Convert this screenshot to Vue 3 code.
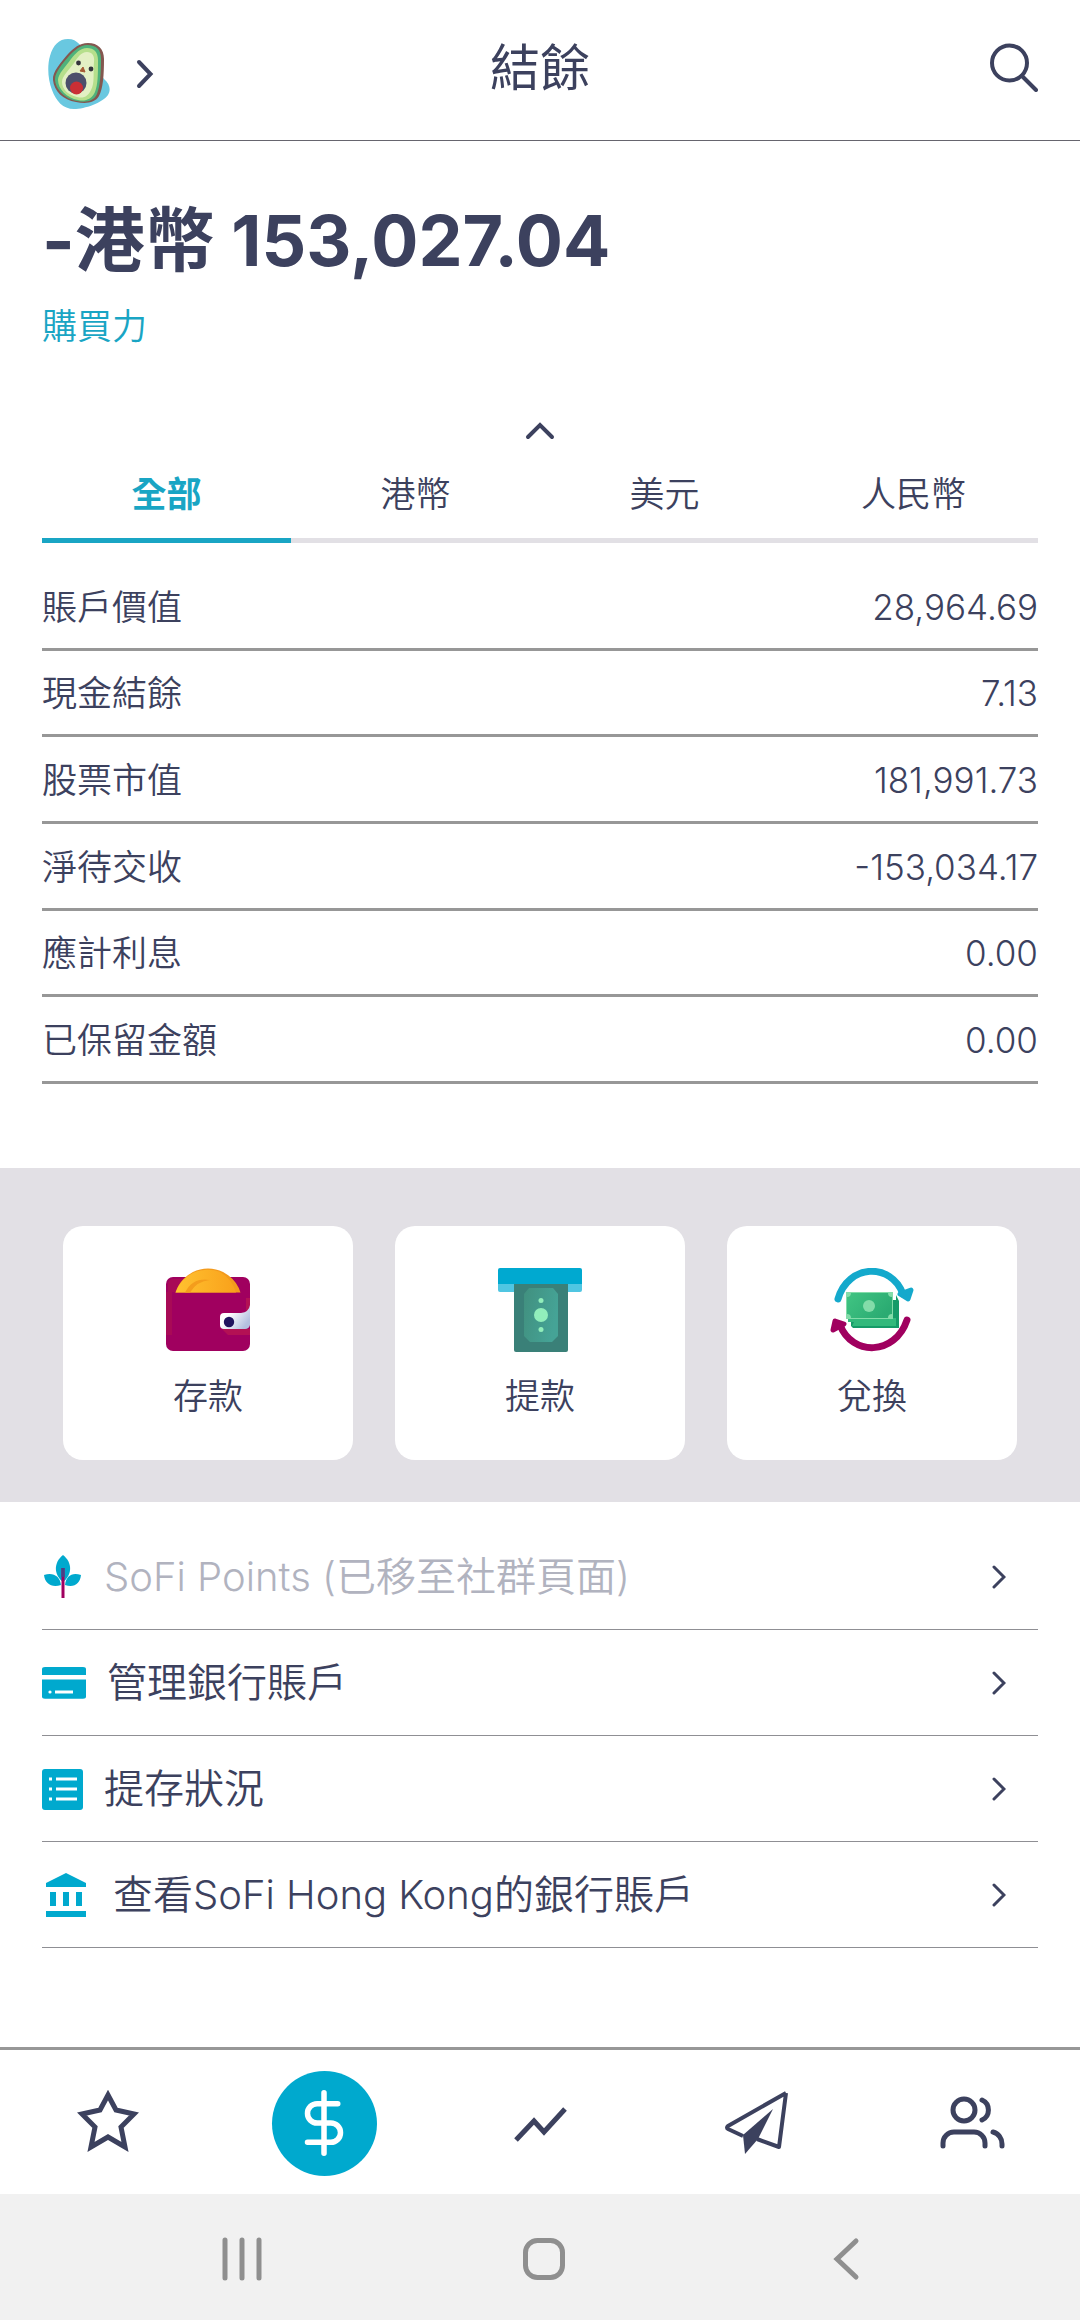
<script setup>
import { ref } from 'vue';

const tabs = ['全部', '港幣', '美元', '人民幣'];
const activeTab = ref('全部');
const showDetail = ref(true);

const balances = [
  { label: '賬戶價值', value: '28,964.69' },
  { label: '現金結餘', value: '7.13' },
  { label: '股票市值', value: '181,991.73' },
  { label: '淨待交收', value: '-153,034.17' },
  { label: '應計利息', value: '0.00' },
  { label: '已保留金額', value: '0.00' },
];

const menus = [
  { icon: 'leaf', label: 'SoFi Points (已移至社群頁面)', disabled: true },
  { icon: 'card', label: '管理銀行賬戶' },
  { icon: 'list', label: '提存狀況' },
  { icon: 'bank', label: '查看SoFi Hong Kong的銀行賬戶' },
];
</script>

<template>
  <div class="page">
    <header class="header">
      <button class="profile-btn" aria-label="個人檔案">
        <svg class="avatar" viewBox="0 0 62 70">
          <path
            d="M20 0C30 0 33 8 41 15C49 23 52 36 56 40C62 45 63 51 60 56C54 64 37 70 26 70C15 70 8 62 4 51C0 41-1 27 2 17C5 6 11 0 20 0Z"
            fill="#69c8e0"
          />
          <path
            d="M40 4C50 4 56 10 56 20C56 36 55 50 51 57C47 64 38 65 28 63C15 61 6 52 5 41C4 33 14 22 20 15C26 9 31 4 40 4Z"
            fill="#84574f"
          />
          <path
            d="M39 6C49 6 53 11 53 20C53 36 52 47 49 55C46 62 38 64 29 62C17 60 7 50 7 40C7 33 15 24 21 17C27 11 32 6 39 6Z"
            fill="#4fb27c"
          />
          <path
            d="M39 9C46 9 50 13 50 21C50 36 50 45 47 53C44 60 37 63 30 61C19 59 10 50 10 41C10 35 18 27 23 20C28 14 32 9 39 9Z"
            fill="#b6df8c"
          />
          <path
            d="M39 13C44 13 47 17 46 23C45 34 47 44 43 51C40 57 36 60 29 58C20 56 14 50 14 43C14 37 21 31 26 24C30 18 33 13 39 13Z"
            fill="#e3f0c4"
          />
          <circle cx="28" cy="44" r="10.5" fill="#4c4f6b" />
          <circle cx="28.5" cy="49" r="6.5" fill="#c92f35" />
          <circle cx="30.5" cy="24" r="2.4" fill="#34343c" />
          <circle cx="43" cy="30" r="2.4" fill="#34343c" />
          <path d="M35 28L37 33L32 32Z" fill="#a55a34" stroke="#a55a34" stroke-linejoin="round" />
        </svg>
        <svg class="profile-arrow" viewBox="0 0 18 30">
          <path d="M3 3L14.5 15L3 27" />
        </svg>
      </button>
      <h1>結餘</h1>
      <button class="search-btn" aria-label="搜尋">
        <svg viewBox="0 0 50 50">
          <circle cx="21.5" cy="21" r="17.5" />
          <path d="M34 34L48 48" />
        </svg>
      </button>
    </header>

    <main>
      <section class="balance">
        <h2>-港幣 153,027.04</h2>
        <a class="buying-power" href="#">購買力</a>
        <button class="toggle-btn" aria-label="收起" @click="showDetail = !showDetail">
          <svg viewBox="0 0 30 18">
            <path d="M3 15L15 3L27 15" />
          </svg>
        </button>
        <div class="tabs" role="tablist">
          <button
            v-for="tab in tabs"
            :key="tab"
            role="tab"
            :aria-selected="activeTab === tab"
            :class="{ active: activeTab === tab }"
            @click="activeTab = tab"
          >
            {{ tab }}
          </button>
        </div>
        <table v-if="showDetail" class="balance-table">
          <tbody>
            <tr v-for="item in balances" :key="item.label">
              <th scope="row">{{ item.label }}</th>
              <td>{{ item.value }}</td>
            </tr>
          </tbody>
        </table>
      </section>

      <section class="actions">
        <button>
          <svg viewBox="0 0 84 84">
            <defs>
              <linearGradient id="strap" x1="0" y1="0" x2="1" y2="0.6">
                <stop offset="0.4" stop-color="#ffffff" />
                <stop offset="1" stop-color="#b4c0e0" />
              </linearGradient>
              <linearGradient id="coin" x1="0" y1="0" x2="1" y2="0">
                <stop offset="0" stop-color="#ffc230" />
                <stop offset="1" stop-color="#f9a11b" />
              </linearGradient>
            </defs>
            <rect y="9" width="84" height="74" rx="7" fill="#a0005f" />
            <path d="M2 24V16Q2 11 8 11H18L10 24ZM0 24H6V67H0Z" fill="#b0134e" opacity="0.5" />
            <path d="M9.5 24.5A34 34 0 0 1 74.5 24.5Z" fill="#f39a1c" />
            <path d="M9.5 24.5A34 34 0 0 1 54 4Q66 11 70 24.5Z" fill="url(#coin)" />
            <path d="M19 24.5Q27 9 44 12Q31 13 24 24.5Z" fill="#f49d1c" />
            <path d="M56 61H84V67H62ZM84 30V41L80 45V30Z" fill="#c01c4c" opacity="0.6" />
            <path d="M58 45H75Q83 44 84 37V57Q83 61 79 61H58Q54 61 54 57V49Q54 45 58 45Z" fill="url(#strap)" />
            <circle cx="63" cy="54" r="5.2" fill="#21145f" />
          </svg>
          <span>存款</span>
        </button>
        <button>
          <svg viewBox="0 0 84 84">
            <defs>
              <linearGradient id="bill" x1="0" y1="0" x2="1" y2="0.3">
                <stop offset="0" stop-color="#41907f" />
                <stop offset="1" stop-color="#45a396" />
              </linearGradient>
            </defs>
            <rect y="8" width="84" height="16" rx="2" fill="#50c6e2" />
            <path d="M2 0H82Q84 0 84 2V16H0V2Q0 0 2 0Z" fill="#00a9d0" />
            <path d="M16 16H70V82Q70 84 68 84H18Q16 84 16 82Z" fill="#3a8078" />
            <path d="M31 20H55L60 26V68L54 74H32L26 68V26Z" fill="url(#bill)" />
            <circle cx="43" cy="47" r="7" fill="#91eebb" />
            <circle cx="43" cy="32.5" r="2.5" fill="#91eebb" />
            <circle cx="43" cy="61.5" r="2.5" fill="#91eebb" />
          </svg>
          <span>提款</span>
        </button>
        <button>
          <svg viewBox="0 0 84 84">
            <defs>
              <linearGradient id="cash" x1="0" y1="0" x2="1" y2="0.5">
                <stop offset="0" stop-color="#41c583" />
                <stop offset="1" stop-color="#2bab72" />
              </linearGradient>
            </defs>
            <path d="M21 32H66V27L69 33V60H23L21 58Z" fill="#159b68" />
            <path d="M18 50V54H24L22 58H66V50Z" fill="#32b97c" />
            <rect x="16.5" y="24.5" width="46" height="26" fill="url(#cash)" stroke="#83dca9" />
            <path d="M17 25H21Q21 29 17 29ZM62 25H58Q58 29 62 29ZM17 50V46Q21 46 21 50ZM62 50V46Q58 46 58 50Z" fill="#83dca9" />
            <circle cx="39" cy="38" r="6" fill="#83dca9" />
            <g fill="none" stroke-width="7" stroke-linecap="round" stroke-linejoin="round">
              <path d="M8 31C18 -4 61 -6 73 26" stroke="#14a9cc" />
              <path d="M70 26L81 22L78 31Z" stroke="#14a9cc" fill="#14a9cc" stroke-width="5" />
              <path d="M77 52C65 88 22 88 10 57" stroke="#a0005f" />
              <path d="M5 53L14 56L3 62Z" stroke="#a0005f" fill="#a0005f" stroke-width="5" />
            </g>
          </svg>
          <span>兌換</span>
        </button>
      </section>

      <nav class="menu">
        <a
          v-for="menu in menus"
          :key="menu.label"
          href="#"
          :class="{ disabled: menu.disabled }"
        >
          <svg v-if="menu.icon === 'leaf'" class="menu-icon" viewBox="0 0 41 44">
            <path d="M21 0C31 8 30 20 21 27C12 20 11 8 21 0Z" fill="#00a9ce" />
            <path d="M19 30C10 33 3 29 2 20C11 17 18 21 19 30ZM23 30C32 33 38 29 39 20C30 17 24 21 23 30Z" fill="#00a9ce" />
            <path d="M21 13V43" stroke="#a0005f" stroke-width="3" />
            <path d="M21 13V22" stroke="#4a3f85" stroke-width="3" />
          </svg>
          <svg v-else-if="menu.icon === 'card'" class="menu-icon wide" viewBox="0 0 44 44">
            <path d="M3 6H41Q44 6 44 9V17H0V9Q0 6 3 6ZM0 23H44V46Q44 49 41 49H3Q0 49 0 46Z" transform="matrix(1 0 0 .74 0 1.500)" fill="#00a9ce" />
            <circle cx="8" cy="31" r="1.6" fill="#fff" />
            <path d="M13 31H31" stroke="#fff" stroke-width="3" />
          </svg>
          <svg v-else-if="menu.icon === 'list'" class="menu-icon" viewBox="0 0 41 44">
            <rect y="2" width="41" height="41" rx="3" fill="#00a9ce" />
            <path d="M14 12H35M14 22H35M14 32H35" stroke="#fff" stroke-width="3" />
            <path d="M7 12H10M7 22H10M7 32H10" stroke="#fff" stroke-width="3" />
          </svg>
          <svg v-else class="menu-icon bank" viewBox="0 0 50 44">
            <path d="M24 0L44 10V14H4V10ZM8 19H14V33H8ZM21 19H27V33H21ZM34 19H40V33H34ZM4 38H44V44H4Z" fill="#00a9ce" />
          </svg>
          <span>{{ menu.label }}</span>
          <svg class="menu-arrow" viewBox="0 0 14 24">
            <path d="M2 2L12 12L2 22" />
          </svg>
        </a>
      </nav>
    </main>

    <nav class="bottom-nav">
      <button aria-label="自選">
        <svg class="nav-icon" viewBox="0 0 66 66">
          <path d="M33 5L41 20L59 24L46 37L50 57L33 47L16 57L20 37L7 24L25 20Z" />
        </svg>
      </button>
      <button aria-label="結餘">
        <span class="nav-circle">
          <svg class="nav-icon" viewBox="0 0 24 24">
            <path d="M12 1V23M17 5H9.5A3.5 3.5 0 0 0 9.5 12H14.5A3.5 3.5 0 0 1 14.5 19H6" />
          </svg>
        </span>
      </button>
      <button aria-label="交易">
        <svg class="nav-icon" viewBox="0 0 66 66">
          <path d="M9 50L27 31L37 42L58 19" />
        </svg>
      </button>
      <button aria-label="動態">
        <svg class="nav-icon plane" viewBox="0 0 66 66">
          <path d="M63 3L5 36Q3 38 5 39L20 46M63 3L56 57L34 49" />
          <path class="fill" d="M50 19L20 45L22 64L35 49Z" />
        </svg>
      </button>
      <button aria-label="社群">
        <svg class="nav-icon round" viewBox="0 0 66 66">
          <circle cx="25" cy="20" r="11" />
          <path d="M43 10A11 11 0 0 1 43 30M4 56V53A11 11 0 0 1 15 42H35A11 11 0 0 1 46 53V56M54 42A12 12 0 0 1 63 54V56" />
        </svg>
      </button>
    </nav>

    <div class="system-bar">
      <button aria-label="最近使用">
        <svg viewBox="0 0 44 44">
          <path d="M5 3V41M22 3V41M39 3V41" />
        </svg>
      </button>
      <button aria-label="主畫面">
        <svg viewBox="0 0 44 44">
          <rect x="3.5" y="3.5" width="37" height="37" rx="12" />
        </svg>
      </button>
      <button aria-label="返回">
        <svg viewBox="0 0 44 44">
          <path d="M32 4L13 22L32 40" />
        </svg>
      </button>
    </div>
  </div>
</template>

<style>
body {
  margin: 0;
  background: #fff;
}
</style>

<style scoped>
.page {
  min-height: 100vh;
  display: flex;
  flex-direction: column;
  background: #fff;
  color: #3c415e;
  font-family: Inter, 'Noto Sans CJK TC', sans-serif;
  font-size: 35px;
  font-weight: 350;
  line-height: 48px;
}

main {
  flex: 1;
}

button {
  padding: 0;
  border: none;
  background: none;
  color: inherit;
  font: inherit;
  cursor: pointer;
}

svg {
  display: block;
  flex-shrink: 0;
}

.header {
  height: 134px;
  padding: 0 42px 6px;
  display: grid;
  grid-template-columns: 1fr auto 1fr;
  align-items: center;
  border-bottom: 1px solid #66656e;
}

.header h1 {
  margin: 0;
  padding-top: 2px;
  font-size: 50px;
  font-weight: 400;
  line-height: 64px;
}

.profile-btn {
  display: flex;
  align-items: center;
  justify-self: start;
  gap: 26px;
  padding: 14px 0 0 6px;
}

.avatar {
  width: 62px;
  height: 70px;
}

.profile-arrow {
  width: 18px;
  height: 30px;
  fill: none;
  stroke: #3c415e;
  stroke-width: 4;
  stroke-linecap: round;
}

.search-btn {
  justify-self: end;
}

.search-btn svg {
  width: 50px;
  height: 50px;
  fill: none;
  stroke: #3c415e;
  stroke-width: 4;
  stroke-linecap: round;
}

.balance {
  padding: 52px 42px 84px;
  display: flex;
  flex-direction: column;
}

.balance h2 {
  margin: 0 0 13px;
  font-size: 70px;
  font-weight: bold;
  line-height: 96px;
}

.buying-power {
  align-self: flex-start;
  color: #19a5c4;
  text-decoration: none;
}

.toggle-btn {
  align-self: center;
  margin-top: 61px;
  height: 39px;
}

.toggle-btn svg {
  width: 30px;
  height: 18px;
  fill: none;
  stroke: #3c415e;
  stroke-width: 4;
  stroke-linecap: round;
}

.tabs {
  display: grid;
  grid-template-columns: repeat(4, 1fr);
}

.tabs button {
  padding: 20px 0;
  border-bottom: 5px solid #e2e0e5;
}

.tabs button.active {
  color: #19a5c4;
  border-color: #19a5c4;
  font-weight: bold;
}

.balance-table {
  width: 100%;
  height: 520px;
  margin-top: 21px;
  border-collapse: separate;
  border-spacing: 0;
}

.balance-table th,
.balance-table td {
  padding: 2px 0 0;
  border-bottom: 3px solid #979797;
  font-weight: 350;
  text-align: left;
}

.balance-table td {
  font-weight: 300;
  text-align: right;
}

.actions {
  padding: 58px 63px 42px;
  display: grid;
  grid-template-columns: repeat(3, 1fr);
  gap: 42px;
  background: #e2e0e5;
}

.actions button {
  padding: 42px 0 40px;
  display: flex;
  flex-direction: column;
  align-items: center;
  gap: 20px;
  border-radius: 20px;
  background: #fff;
}

.actions svg {
  width: 84px;
  height: 84px;
}

.menu {
  padding: 22px 42px 0;
}

.menu a {
  height: 105px;
  padding-right: 32px;
  display: flex;
  align-items: center;
  border-bottom: 1px solid #8f8f94;
  color: inherit;
  font-size: 40px;
  text-decoration: none;
}

.menu span {
  flex: 1;
  margin-left: 21px;
}

.menu .disabled span {
  color: #b1b3bf;
}

.menu-icon {
  width: 41px;
  height: 44px;
}

.menu-icon.wide {
  width: 44px;
}

.menu-icon.bank {
  width: 50px;
}

.menu-arrow {
  width: 14px;
  height: 24px;
  fill: none;
  stroke: #3c415e;
  stroke-width: 3;
  stroke-linecap: round;
}

.bottom-nav {
  height: 142px;
  padding-top: 2px;
  display: grid;
  grid-template-columns: repeat(5, 1fr);
  border-top: 3px solid #979797;
}

.bottom-nav button {
  display: flex;
  align-items: center;
  justify-content: center;
}

.nav-icon {
  width: 66px;
  height: 66px;
  fill: none;
  stroke: #3c415e;
  stroke-width: 5;
}

.nav-icon.plane {
  stroke-width: 4;
  stroke-linejoin: round;
}

.nav-icon.round {
  stroke-linecap: round;
}

.fill {
  fill: #3c415e;
  stroke: none;
}

.nav-circle {
  width: 105px;
  height: 105px;
  display: flex;
  align-items: center;
  justify-content: center;
  border-radius: 50%;
  background: #00a9ce;
}

.nav-circle .nav-icon {
  stroke: #fff;
  stroke-width: 2;
  stroke-linecap: round;
}

.system-bar {
  height: 126px;
  padding: 0 83px 0 91px;
  display: grid;
  grid-template-columns: repeat(3, 1fr);
  background: #f1f1f1;
}

.system-bar button {
  display: flex;
  align-items: center;
  justify-content: center;
}

.system-bar svg {
  width: 44px;
  height: 44px;
  margin-top: 4px;
  fill: none;
  stroke: #8f8f8f;
  stroke-width: 5;
  stroke-linecap: round;
}
</style>
